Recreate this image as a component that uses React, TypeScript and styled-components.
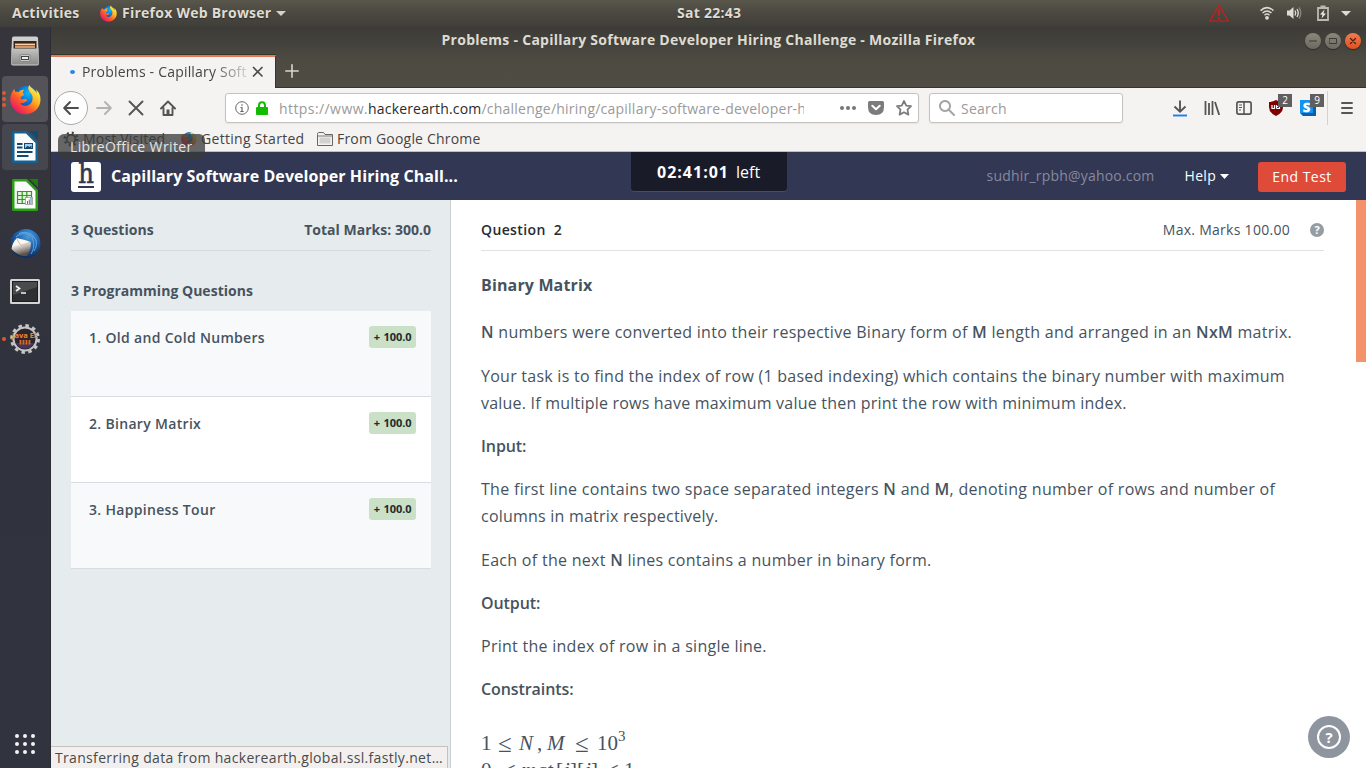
import React from 'react';
import styled, { createGlobalStyle, css } from 'styled-components';

const Global = createGlobalStyle`
  * { box-sizing: border-box; }
  body { margin: 0; background: #fff; overflow: hidden; font-family: "Open Sans", "Noto Sans", sans-serif; }
  svg { display: block; flex: none; }
  p { margin: 0; }
`;

/* ---------- Desktop ---------- */

const Desktop = styled.div`
  position: relative;
  display: flex;
  flex-direction: column;
  width: 1366px;
  height: 768px;
  overflow: hidden;
`;

const TopBar = styled.header`
  display: flex;
  align-items: center;
  height: 27px;
  padding: 0 15px 1px 12px;
  background: linear-gradient(#59564b, #4b4941 45%, #3f3e39);
  color: #dfdbd2;
  font-size: 14px;
  font-weight: 700;
  letter-spacing: 0.25px;
  line-height: 18px;
  white-space: nowrap;
  text-shadow: 0 1px 1px rgba(0, 0, 0, 0.35);
`;

const ActivitiesLabel = styled.span`
  width: 88px;
`;

const AppMenu = styled.div`
  display: flex;
  align-items: center;
  width: 577px;
  gap: 5px;
`;

const Clock = styled.span`
  flex: 1;
`;

const Tray = styled.div`
  display: flex;
  align-items: center;
`;

const Gap = styled.span<{ $w: number }>`
  width: ${(p) => p.$w}px;
`;

const Workspace = styled.div`
  display: flex;
  flex: 1;
  min-height: 0;
`;

const Dock = styled.nav`
  display: flex;
  flex-direction: column;
  width: 51px;
  background: linear-gradient(#37353c, #30333d 45%, #31343f);
  border-right: 1px solid #2c2d34;
`;

const DockTile = styled.div<{ $shade?: string }>`
  position: relative;
  display: flex;
  align-items: center;
  justify-content: center;
  width: 46px;
  height: 46px;
  margin: 1px 2px;
  border-radius: 4px;
  background: ${(p) => p.$shade || 'transparent'};
`;

const RunningDots = styled.div`
  position: absolute;
  left: 0;
  top: 0;
  height: 46px;
  display: flex;
  flex-direction: column;
  justify-content: center;
  gap: 2px;
`;

const Dot = styled.i`
  width: 4px;
  height: 4px;
  border-radius: 50%;
  background: #dd5a2c;
`;

const AppsGrid = styled.div`
  display: grid;
  grid-template-columns: repeat(3, 4px);
  gap: 4px;
  justify-content: center;
  margin-top: auto;
  padding-bottom: 14px;
`;

const AppsDot = styled.i`
  width: 4px;
  height: 4px;
  border-radius: 50%;
  background: #f3f3f3;
`;

const DockTooltip = styled.div`
  position: absolute;
  left: 58px;
  top: 134px;
  width: 147px;
  height: 25px;
  padding-left: 12px;
  border-radius: 6px;
  background: rgba(56, 58, 58, 0.76);
  color: #e4e4e4;
  font-size: 14px;
  line-height: 25px;
  letter-spacing: 0.38px;
  white-space: nowrap;
`;

/* ---------- Browser chrome ---------- */

const Window = styled.main`
  display: flex;
  flex-direction: column;
  flex: 1;
  min-width: 0;
`;

const Frame = styled.div`
  height: 61px;
  background: linear-gradient(#3c3b37, #45433d 30%, #4d4a42 52%, #504c43);
  display: flex;
  flex-direction: column;
`;

const TitleBar = styled.div`
  display: grid;
  grid-template-columns: 1fr auto 1fr;
  align-items: center;
  height: 28px;
  color: #dfdbd2;
  font-size: 14px;
  font-weight: 700;
  letter-spacing: 0.27px;
  white-space: nowrap;
`;

const WindowTitle = styled.span`
  height: 20px;
  line-height: 18px;
`;

const WindowButtons = styled.div`
  display: flex;
  justify-content: flex-end;
  gap: 4px;
  padding-right: 5px;
`;

const RoundButton = styled.span<{ $close?: boolean }>`
  display: flex;
  align-items: center;
  justify-content: center;
  width: 16px;
  height: 16px;
  border-radius: 50%;
  box-shadow: 0 1px 1px rgba(0, 0, 0, 0.4);
  background: ${(p) => (p.$close ? 'linear-gradient(#f27b4f, #e0501f)' : 'linear-gradient(#8a877c, #6b6961)')};
`;

const TabStrip = styled.div`
  display: flex;
  flex: 1;
  border-bottom: 1px solid #35342f;
`;

const Tab = styled.div`
  display: flex;
  align-items: center;
  width: 225px;
  height: 33px;
  margin-bottom: -1px;
  padding: 0 0 1px 19px;
  background: #f4f3f2;
  border-top: 2px solid #e17b55;
  border-right: 1px solid #35342f;
  box-shadow: 0 -1px 0 #35342f;
  color: #444;
  font-size: 14px;
  letter-spacing: 0.2px;
`;

const LoadingDot = styled.i`
  width: 5px;
  height: 4px;
  margin-right: 7px;
  border-radius: 50%;
  background: #2a87e8;
`;

const TabTitle = styled.span`
  width: 166px;
  height: 20px;
  line-height: 19px;
  overflow: hidden;
  white-space: nowrap;
  mask-image: linear-gradient(90deg, #000 78%, rgba(0, 0, 0, 0.15));
`;

const TabClose = styled.div`
  margin-left: 4px;
`;

const NewTab = styled.div`
  padding: 9px 0 0 9px;
`;

const NavBar = styled.div`
  display: flex;
  align-items: center;
  height: 40px;
  padding: 0 0 0 4px;
  background: #f4f3f2;
`;

const ToolCell = styled.div<{ $round?: boolean }>`
  position: relative;
  display: flex;
  align-items: center;
  justify-content: center;
  width: 32px;
  height: 32px;
  ${(p) =>
    p.$round &&
    css`
      width: 34px;
      height: 34px;
      margin: 0 0 0 -1px;
      border: 1px solid #aaa;
      border-radius: 50%;
      background: #fdfdfd;
    `}
`;

const Field = styled.div<{ $w: number; $ml: number }>`
  display: flex;
  align-items: center;
  width: ${(p) => p.$w}px;
  height: 30px;
  margin-left: ${(p) => p.$ml}px;
  padding: 0 6px 0 9px;
  border: 1px solid #c4c3c2;
  border-radius: 3px;
  background: #fff;
  box-shadow: 0 1px 2px rgba(0, 0, 0, 0.06);
  color: #9a9a9a;
  font-size: 14px;
  letter-spacing: 0.23px;
  white-space: nowrap;
`;

const Address = styled.span`
  width: 525px;
  margin-left: 11px;
  overflow: hidden;
`;

const AddressScheme = styled.span`
  letter-spacing: 0.42px;
`;

const AddressHost = styled.span`
  color: #2b2b2b;
  letter-spacing: 0.18px;
`;

const FieldActions = styled.div`
  display: flex;
  align-items: center;
  gap: 12px;
  margin-left: auto;
`;

const SearchHint = styled.span`
  margin-left: 6px;
`;

const ExtensionCells = styled.div`
  display: flex;
  margin-left: 41px;
`;

const Badge = styled.span`
  position: absolute;
  left: 18px;
  top: 2px;
  width: 14px;
  height: 13px;
  background: #5f5f5f;
  color: #fff;
  font-size: 10px;
  line-height: 13px;
  text-align: center;
`;

const Separator = styled.i`
  width: 1px;
  height: 34px;
  margin: 0 12px 0 3px;
  background: #d3d2d1;
`;

const BookmarkBar = styled.div`
  display: flex;
  align-items: center;
  height: 24px;
  padding: 0 0 2px 12px;
  background: #f4f3f2;
  border-bottom: 1px solid #c0bfbf;
  color: #444;
  font-size: 14px;
  letter-spacing: 0.2px;
  white-space: nowrap;
`;

const Bookmark = styled.div<{ $w?: number; $ls?: number }>`
  display: flex;
  align-items: center;
  gap: 4px;
  width: ${(p) => (p.$w ? p.$w + 'px' : 'auto')};
  letter-spacing: ${(p) => p.$ls ?? 0.2}px;
`;

const StatusPopup = styled.div`
  position: absolute;
  left: 51px;
  bottom: 0;
  width: 397px;
  height: 22px;
  padding-left: 4px;
  border: 1px solid #c6c1be;
  border-width: 1px 1px 0 0;
  background: #f2f0ef;
  color: #4a4a4a;
  font-size: 14px;
  line-height: 22px;
  letter-spacing: 0.33px;
  white-space: nowrap;
`;

/* ---------- Challenge page ---------- */

const Page = styled.div`
  display: flex;
  flex-direction: column;
  flex: 1;
  min-height: 0;
  letter-spacing: 0.3px;
`;

const PageHeader = styled.div`
  display: flex;
  height: 48px;
  padding: 0 20px;
  background: #323754;
  color: #fff;
  white-space: nowrap;
`;

const Logo = styled.div`
  display: flex;
  flex-direction: column;
  align-items: center;
  width: 30px;
  height: 30px;
  margin: 10px 10px 0 0;
  border-radius: 3px;
  background: #fff;
  color: #323754;
  font-family: "DejaVu Serif Condensed", "DejaVu Serif", serif;
  font-size: 27px;
  letter-spacing: 0;
  -webkit-text-stroke: 0.6px #323754;
`;

const LogoLetter = styled.span`
  height: 24px;
  line-height: 24px;
`;

const LogoRule = styled.i`
  width: 16px;
  height: 2px;
  background: #323754;
`;

const ChallengeName = styled.h1`
  width: 520px;
  margin: 0;
  font-size: 16px;
  font-weight: 700;
  line-height: 48px;
  letter-spacing: 0.08px;
`;

const Timer = styled.div`
  width: 156px;
  height: 39px;
  border-radius: 0 0 3px 3px;
  background: #1a1b29;
  box-shadow: 0 1px 0 #474b66;
  font-size: 16px;
  line-height: 40px;
  padding-left: 26px;
  letter-spacing: 0;
`;

const TimerDigits = styled.b`
  margin-right: 7px;
  letter-spacing: 1px;
`;

const Account = styled.div`
  display: flex;
  margin-left: auto;
  font-size: 14px;
  line-height: 48px;
`;

const Email = styled.span`
  margin-right: 30px;
  color: #868a9c;
  letter-spacing: 0.2px;
`;

const HelpMenu = styled.span`
  display: flex;
  align-items: center;
  gap: 4px;
  margin-right: 29px;
`;

const EndTest = styled.button`
  width: 88px;
  height: 30px;
  margin-top: 10px;
  padding: 0;
  border: 0;
  border-radius: 3px;
  background: #de4b39;
  color: #fff;
  font: 14px/30px "Open Sans", sans-serif;
  letter-spacing: 0.45px;
`;

const Panels = styled.div`
  display: flex;
  flex: 1;
  min-height: 0;
  color: #46535e;
`;

const Sidebar = styled.aside`
  width: 400px;
  padding: 0 19px 0 20px;
  border-right: 1px solid #cdd0d2;
  background: #e6ebee;
  font-size: 14px;
  font-weight: 600;
`;

const PanelHeading = styled.div<{ $line: string; $bold?: boolean }>`
  display: flex;
  justify-content: space-between;
  height: 51px;
  border-bottom: 1px solid ${(p) => p.$line};
  font-size: 14px;
  font-weight: ${(p) => (p.$bold ? 700 : 400)};
  letter-spacing: ${(p) => (p.$bold ? 0.02 : 0.28)}px;
  line-height: 60px;
`;

const SectionTitle = styled.h2`
  margin: 0;
  padding-top: 30px;
  height: 60px;
  font-size: 14px;
  font-weight: 700;
  line-height: 20px;
  letter-spacing: 0.02px;
`;

const QuestionRow = styled.div<{ $active?: boolean }>`
  display: flex;
  justify-content: space-between;
  height: 86px;
  padding: 15px 15px 0 18px;
  border-bottom: 1px solid #d7dce0;
  background: ${(p) => (p.$active ? '#fff' : '#f8f9fb')};
  line-height: 24px;
  letter-spacing: 0.32px;
`;

const MarksTag = styled.span`
  width: 47px;
  height: 22px;
  border-radius: 3px;
  background: #cae0c7;
  color: #232b2b;
  font-size: 11px;
  font-weight: 700;
  line-height: 22px;
  letter-spacing: -0.1px;
  word-spacing: 1px;
  text-align: center;
`;

const Statement = styled.section`
  flex: 1;
  padding: 0 32px 0 30px;
  background: #fff;
`;

const QuestionNumber = styled.span`
  color: #252c33;
  font-weight: 600;
  letter-spacing: 0.38px;
  white-space: pre;
`;

const MaxMarks = styled.span`
  display: flex;
  align-items: flex-start;
  gap: 20px;
`;

const HelpMark = styled.i`
  width: 14px;
  height: 14px;
  margin: 23px 0 0;
  border-radius: 50%;
  background: #959ca2;
  color: #fff;
  font: 700 11px/14px "Open Sans", sans-serif;
  letter-spacing: 0;
  text-align: center;
`;

const Prose = styled.div`
  padding-top: 21.200px;
  font-size: 16px;
  line-height: 27.200px;
  white-space: nowrap;

  b { font-weight: 600; }
`;

const Paragraph = styled.p`
  margin-bottom: 16px;
`;

const Line = styled.span<{ $ls?: number }>`
  display: block;
  letter-spacing: ${(p) => p.$ls ?? 0.27}px;
`;

const Label = styled.h4`
  margin: 0 0 16px;
  font-size: 16px;
  font-weight: 600;
  letter-spacing: -0.08px;
`;

const ProblemTitle = styled.h3`
  margin: 0 0 20px;
  font-size: 16px;
  font-weight: 700;
  letter-spacing: 0.15px;
`;

const Formulas = styled.div`
  padding-top: 11px;
`;

const Formula = styled.div`
  display: flex;
  height: 27px;
  font: 21px/27px "Liberation Serif", serif;
  letter-spacing: 0;
`;

const Term = styled.span<{ $w: number; $italic?: boolean }>`
  width: ${(p) => p.$w}px;
  font-style: ${(p) => (p.$italic ? 'italic' : 'normal')};
`;

const Relation = styled(Term)`
  font-size: 25px;
`;

const Power = styled.span`
  margin-top: -7px;
  font-size: 15px;
`;

const ScrollThumb = styled.div`
  width: 10px;
  height: 162px;
  background: #f4926c;
`;

const ChatButton = styled.div`
  position: absolute;
  left: 1308px;
  top: 716px;
  display: flex;
  align-items: center;
  justify-content: center;
  width: 42px;
  height: 42px;
  border-radius: 50%;
  background: #8f959e;
`;

const ChatRing = styled.span`
  width: 24px;
  height: 24px;
  border: 2px solid #fff;
  border-radius: 50%;
  color: #fff;
  font-size: 15px;
  font-weight: 700;
  line-height: 21px;
  text-align: center;
`;

/* ---------- Drawings ---------- */

const FirefoxLogo = ({ size, id }: { size: number; id: string }) => (
  <svg width={size} height={size} viewBox="0 0 32 32">
    <defs>
      <linearGradient id={id + 'a'} x1="0.85" y1="0.1" x2="0.15" y2="0.9">
        <stop offset="0" stopColor="#fff34a" />
        <stop offset="0.35" stopColor="#ffb01e" />
        <stop offset="0.62" stopColor="#ff5b2a" />
        <stop offset="1" stopColor="#e5156b" />
      </linearGradient>
      <radialGradient id={id + 'b'} cx="0.6" cy="0.3" r="0.75">
        <stop offset="0" stopColor="#12b8f5" />
        <stop offset="0.5" stopColor="#0a72d8" />
        <stop offset="1" stopColor="#1d2f8c" />
      </radialGradient>
    </defs>
    <circle cx="16.5" cy="14.5" r="12.5" fill={`url(#${id}b)`} />
    <path
      d="M20 1c-2 3-1 5 1 8 2 2 3 5 2 8-1 4-5 6-8 5.500-2-.3-3.500-1.400-4.500-3 2 .6 3.600.2 5-1 1-.8 1.800-.6 2-1.400.2-.9-.8-1.800-2.500-1.600-1.800.3-2.700.5-4 -.3 0-1.600 1-2.700 3.200-3.600.3-1.400-.3-2-1.200-2.300.2-1.500 1-2.600 1.900-3.300-3-.2-5 .9-6.100 2.400C7.300 8 6.500 8 5.700 8.200 4.900 7.400 4.500 6.300 4.500 5 1.500 8.500 0 12.500.3 17c.6 8 7.200 14.200 15.500 14.200 8.800 0 15.700-6.800 15.700-15.200 0-4.500-2-8-4.700-10.200.6 1.500.9 2.700.8 4C26 5.500 21.500 4.500 20 1z"
      fill={`url(#${id}a)`}
    />
  </svg>
);

const FilesLogo = () => (
  <svg width="28" height="30" viewBox="0 0 28 30">
    <defs>
      <linearGradient id="cab" x1="0" y1="0" x2="0" y2="1">
        <stop offset="0" stopColor="#c4c4c2" />
        <stop offset="1" stopColor="#8b8b89" />
      </linearGradient>
    </defs>
    <path d="M1 2Q1 .5 3 .5h22q2 0 2 1.500l1 25.500q0 2-2 2H2q-2 0-2-2z" fill="#cfcfcd" />
    <path d="M2.500 5h23v9h-23z" fill="#3c241d" />
    <path d="M4 7h20v5H4z" fill="#c3552f" />
    <path d="M4 8.500h20M4 11h20" stroke="#f4d3a4" strokeWidth="1" />
    <path d="M.5 12.500h27v16H.5z" fill="url(#cab)" />
    <rect x="9" y="18.500" width="10" height="7" rx="1.500" fill="#c9c9c7" stroke="#777" strokeWidth=".7" />
    <rect x="10.500" y="20.500" width="7" height="3" fill="#eee" stroke="#444" />
  </svg>
);

const OfficeLogo = ({ color, fold, sheet }: { color: string; fold: string; sheet?: boolean }) => (
  <svg width="26" height="32" viewBox="0 0 26 32">
    <path d="M0 1.500Q0 0 1.500 0H15l11 11v19.500q0 1.500-1.500 1.500h-23Q0 32 0 30.500z" fill={color} />
    <path d="M17.500 0H26v8.500z" fill={fold} />
    <path d="M2.500 2.500H14l9.500 9.500v17.500h-21z" fill="#fbfbfb" />
    {sheet ? (
      <g>
        <path d="M5.500 12.500h14v12h-14zM5.500 16.500h14M5.500 20.500h14M10.200 12.500v12M14.800 12.500v12" fill="#e4f5df" stroke="#2f9a1c" strokeWidth="1.200" />
        <rect x="13.500" y="18.500" width="7" height="7" fill="#fff" stroke="#999" strokeWidth=".8" />
        <path d="M15.500 25v-3M17.300 25v-4.500" stroke="#c0503a" />
        <path d="M19 25v-6" stroke="#4a7fb5" />
      </g>
    ) : (
      <g>
        <path d="M5 13h5.500M5 16.500h5.500M5 21h15.500M5 25h11.500" stroke="#13486f" strokeWidth="2" />
        <rect x="12.500" y="12.500" width="8" height="5" fill="#9fd0ee" stroke="#13486f" />
        <path d="M13 17.200l2.500-2.500 2 1.200 2-1.500v2.800z" fill="#13486f" />
      </g>
    )}
  </svg>
);

const ThunderbirdLogo = () => (
  <svg width="31" height="31" viewBox="0 0 31 31">
    <defs>
      <radialGradient id="tb" cx="0.6" cy="0.25" r="0.8">
        <stop offset="0" stopColor="#4a9bdb" />
        <stop offset="0.5" stopColor="#1f5ea8" />
        <stop offset="1" stopColor="#0b2554" />
      </radialGradient>
      <linearGradient id="env" x1="0" y1="0" x2="0.3" y2="1">
        <stop offset="0.4" stopColor="#fbf8f2" />
        <stop offset="1" stopColor="#5c5149" />
      </linearGradient>
    </defs>
    <path d="M3 7C5 4 8 4 10 2.500 15-.5 23 1 27 6c5 6 4.500 15-1 20-2.500 2.500-5 4-8.500 4C10 30 4 27 2 21 0 16 1 13 .5 10 2 10 3 9 3 7z" fill="url(#tb)" />
    <path d="M1.500 21C2 17 3.500 13 7 10c5 1.500 9 2 13.500 4 1 4-.5 9-3.500 14-5 .5-10-1-15.500-7z" fill="url(#env)" />
    <path d="M7 10.500c1 3 3 6.500 5 7 3-.5 5-1.500 8-3.500" fill="none" stroke="#c4bdb2" />
    <path d="M6 9c5-5 13-4 17 1M9 5.500c7-3 14 0 17 7M22 10c3 5 2 11-1 16M26 12c1 4 0 8-2 11" fill="none" stroke="#62aee4" strokeWidth=".9" />
  </svg>
);

const TerminalLogo = () => (
  <svg width="30" height="25" viewBox="0 0 30 25">
    <rect width="30" height="25" rx="1.500" fill="#d4d4d2" />
    <rect x="2.500" y="2.500" width="25" height="20" fill="#2c3032" stroke="#1b1d1e" />
    <path d="M3 3h24v5L3 16z" fill="#484c4e" />
    <path d="M6 7l3.500 2.500L6 12M11 14h5" fill="none" stroke="#f2f2f2" strokeWidth="1.700" />
  </svg>
);

const GearLogo = () => (
  <svg width="32" height="30" viewBox="0 0 32 30">
    <circle cx="16" cy="15" r="11.500" fill="#2a2530" stroke="#c6c6c6" strokeWidth="2" />
    <circle cx="16" cy="15" r="13.500" fill="none" stroke="#c6c6c6" strokeWidth="2.800" strokeDasharray="3.500 3.570" />
    <path d="M7 19a10 10 0 0 0 18 0z" fill="#45355c" />
    <text x="16" y="14" textAnchor="middle" fontFamily="Open Sans" fontWeight="700" fontSize="6.500" fill="#f0862a" textLength="26" lengthAdjust="spacingAndGlyphs">Java EE</text>
    <path d="M11.500 16v4.500M14.500 16v4.500M17.500 16v4.500M20.500 16v4.500" stroke="#dc6a24" strokeWidth="1.800" />
  </svg>
);

const Stroke = ({ d, w = 16, h = 16, color = '#4c4c4c', sw = 2, fill = 'none' }: { d: string; w?: number; h?: number; color?: string; sw?: number; fill?: string }) => (
  <svg width={w} height={h} viewBox={`0 0 ${w} ${h}`} fill={fill} stroke={color} strokeWidth={sw} strokeLinecap="round" strokeLinejoin="round">
    <path d={d} />
  </svg>
);

const Caret = ({ w, h, color }: { w: number; h: number; color: string }) => (
  <svg width={w} height={h} viewBox={`0 0 ${w} ${h}`}>
    <path d={`M0 0H${w}L${w / 2} ${h}z`} fill={color} />
  </svg>
);

const WarningIcon = () => (
  <svg width="20" height="18" viewBox="0 0 20 18" fill="none" stroke="#cf1d1d" strokeWidth="1.200">
    <path d="M10 1.200L19.200 17H.8z" />
    <path d="M10 6v6M10 13.500v2" strokeWidth="1.800" />
  </svg>
);

const WifiIcon = () => (
  <svg width="14" height="14" viewBox="0 0 14 14" fill="none" stroke="#dfdbd2">
    <path d="M.6 4.600Q7-1.400 13.400 4.600" strokeWidth="1.500" />
    <path d="M2.600 7Q7 3 11.400 7" strokeWidth="1.500" />
    <path d="M4.500 9.200Q7 7 9.500 9.200" strokeWidth="1.400" />
    <circle cx="7" cy="11.800" r="1.900" fill="#dfdbd2" stroke="none" />
  </svg>
);

const VolumeIcon = () => (
  <svg width="15" height="14" viewBox="0 0 15 14" fill="none" stroke="#dfdbd2" strokeWidth="1.400">
    <path d="M0 4.500h2.500L6.500 1v12L2.500 9.500H0z" fill="#dfdbd2" stroke="none" />
    <path d="M8 4.500q1.500 2.500 0 5M10 3q2.500 4 0 8" />
    <path d="M12 1.500q3.500 5.500 0 11" stroke="#88857c" />
  </svg>
);

const BatteryIcon = () => (
  <svg width="12" height="16" viewBox="0 0 12 16">
    <path d="M3.500 1.500h5M1 3h10v12H1z" fill="none" stroke="#bdb9b0" strokeWidth="1.800" />
    <path d="M7.500 4.500L3 9.500h2.500L4.500 13.500 9 8.500H6.500z" fill="#efece5" />
  </svg>
);

const InfoIcon = () => (
  <svg width="14" height="14" viewBox="0 0 14 14" fill="none" stroke="#666">
    <circle cx="7" cy="7" r="6.300" />
    <path d="M7 3.200v1.600M5.500 6.500H7v4M5.300 10.500h3.400" strokeWidth="1.200" />
  </svg>
);

const LockIcon = () => (
  <svg width="12" height="14" viewBox="0 0 12 14">
    <path d="M3 7V4.500Q3 1.200 6 1.200T9 4.500V7" fill="none" stroke="#12bc00" strokeWidth="2" />
    <rect y="6" width="12" height="8" rx="1" fill="#12bc00" />
  </svg>
);

const DotsIcon = () => (
  <svg width="16" height="4" viewBox="0 0 16 4" fill="#777">
    <circle cx="2" cy="2" r="2" />
    <circle cx="8" cy="2" r="2" />
    <circle cx="14" cy="2" r="2" />
  </svg>
);

const PocketIcon = () => (
  <svg width="16" height="14" viewBox="0 0 16 14">
    <path d="M1.500 0h13Q16 0 16 1.500V6q0 8-8 8T0 6V1.500Q0 0 1.500 0z" fill="#7c7c7c" />
    <path d="M4.300 4.700L8 8.200l3.700-3.500" fill="none" stroke="#fff" strokeWidth="2" strokeLinecap="round" strokeLinejoin="round" />
  </svg>
);

const HomeIcon = () => (
  <svg width="16" height="16" viewBox="0 0 16 16" fill="none" stroke="#555" strokeWidth="1.900" strokeLinejoin="round" strokeLinecap="round">
    <path d="M1 8.500L8 1.500l7 7M3.500 8v7h9V8" />
    <path d="M8 9.500V15" strokeWidth="3" strokeLinecap="butt" />
  </svg>
);

const DownloadIcon = () => (
  <svg width="16" height="18" viewBox="0 0 16 18" fill="none" strokeWidth="1.900">
    <path d="M8 1.500v11M2.500 7.500L8 12.700l5.500-5.200" stroke="#555" />
    <path d="M1 16.500h14" stroke="#1a80ea" />
  </svg>
);

const MostVisitedIcon = () => (
  <svg width="16" height="16" viewBox="0 0 16 16" fill="none" stroke="#444">
    <circle cx="8" cy="8" r="4.300" strokeWidth="1.600" />
    <circle cx="8" cy="8" r="6.300" strokeWidth="2.400" strokeDasharray="2 2.950" />
  </svg>
);

const FolderIcon = () => (
  <svg width="16" height="14" viewBox="0 0 16 14">
    <path d="M.5 2.500V13.500h15V2.500H8L6.500.5h-5Q.5.500.5 2.500z" fill="#f4f3f2" stroke="#666" />
    <path d="M2.500 5.500h11v6h-11z" fill="#d2d1d0" stroke="none" />
    <path d="M.5 4h15" stroke="#777" />
  </svg>
);

const LibraryIcon = () => (
  <svg width="16" height="14" viewBox="0 0 16 14" fill="none" stroke="#555" strokeWidth="1.800">
    <path d="M1.500 0v14M5 2v12M8.500 0v14M11 1l4.200 13" />
  </svg>
);

const SidebarIcon = () => (
  <svg width="16" height="14" viewBox="0 0 16 14" fill="none" stroke="#555">
    <rect x=".9" y=".9" width="14.200" height="12.200" rx="1.800" strokeWidth="1.700" />
    <path d="M8 1v12" strokeWidth="1.500" />
    <path d="M3 4h3M3 6.500h3M3 9h2" />
  </svg>
);

const ShieldIcon = () => (
  <svg width="14" height="16" viewBox="0 0 14 16">
    <path d="M7 0q3 2 7 2v5q0 6-7 9-7-3-7-9V2q4 0 7-2z" fill="#800000" />
    <path d="M3 5v3.500h2.500V5M7.500 8.500V5M7.500 8.500h3v-2h-3" fill="none" stroke="#fff" strokeWidth="1.200" />
  </svg>
);

const CubeIcon = () => (
  <svg width="16" height="16" viewBox="0 0 16 16">
    <path d="M0 0h13v13H0z" fill="#1293f0" />
    <path d="M0 13h13V0l3 3v13H3z" fill="#0a5fa8" />
    <text x="6.500" y="11.500" textAnchor="middle" fontFamily="Open Sans" fontWeight="700" fontSize="13" fill="#fff" stroke="#fff" strokeWidth=".6">S</text>
  </svg>
);

/* ---------- Content ---------- */

const questions = ['1. Old and Cold Numbers', '2. Binary Matrix', '3. Happiness Tour'];

export default function App() {
  return (
    <Desktop>
      <Global />
      <TopBar>
        <ActivitiesLabel>Activities</ActivitiesLabel>
        <AppMenu>
          <FirefoxLogo size={17} id="menu" />
          <span>Firefox Web Browser</span>
          <Caret w={10} h={5} color="#d5d1c8" />
        </AppMenu>
        <Clock>Sat 22:43</Clock>
        <Tray>
          <WarningIcon />
          <Gap $w={31} />
          <WifiIcon />
          <Gap $w={13} />
          <VolumeIcon />
          <Gap $w={15} />
          <BatteryIcon />
          <Gap $w={12} />
          <Caret w={10} h={5} color="#dfdbd2" />
        </Tray>
      </TopBar>

      <Workspace>
        <Dock>
          <DockTile><FilesLogo /></DockTile>
          <DockTile $shade="#54535a">
            <RunningDots><Dot /><Dot /><Dot /></RunningDots>
            <FirefoxLogo size={31} id="dock" />
          </DockTile>
          <DockTile $shade="#45464e"><OfficeLogo color="#136294" fold="#0d4d77" /></DockTile>
          <DockTile><OfficeLogo color="#2aa015" fold="#1f7d10" sheet /></DockTile>
          <DockTile><ThunderbirdLogo /></DockTile>
          <DockTile><TerminalLogo /></DockTile>
          <DockTile>
            <RunningDots><Dot /></RunningDots>
            <GearLogo />
          </DockTile>
          <AppsGrid>
            {Array.from({ length: 9 }, (_, i) => <AppsDot key={i} />)}
          </AppsGrid>
        </Dock>

        <Window>
          <Frame>
            <TitleBar>
              <span />
              <WindowTitle>Problems - Capillary Software Developer Hiring Challenge - Mozilla Firefox</WindowTitle>
              <WindowButtons>
                <RoundButton><Stroke w={8} h={8} d="M0.5 4h7" color="#3c3b37" sw={1} /></RoundButton>
                <RoundButton><Stroke w={8} h={8} d="M.5 1.500h7v5h-7z" color="#3c3b37" sw={1} /></RoundButton>
                <RoundButton $close><Stroke w={8} h={8} d="M1.500 1.500l5 5M6.500 1.500l-5 5" color="#4a2212" sw={1.3} /></RoundButton>
              </WindowButtons>
            </TitleBar>
            <TabStrip>
              <Tab>
                <LoadingDot />
                <TabTitle>Problems - Capillary Soft</TabTitle>
                <TabClose><Stroke w={12} h={12} d="M1.500 1.500l8.500 8.500M10 1.500l-8.500 8.500" sw={1.7} /></TabClose>
              </Tab>
              <NewTab><Stroke w={14} h={14} d="M7 .8v12.400M.8 7h12.400" color="#d8d5cd" sw={1.6} /></NewTab>
            </TabStrip>
          </Frame>

          <NavBar>
            <ToolCell $round><Stroke d="M15 8H1.500M7 2L1.200 8 7 14" sw={1.9} /></ToolCell>
            <ToolCell><Stroke d="M1 8h13.500M9 2l5.800 6L9 14" color="#b4b3b2" sw={1.9} /></ToolCell>
            <ToolCell><Stroke d="M1.500 1.500l13 13M14.500 1.500l-13 13" sw={1.9} color="#555" /></ToolCell>
            <ToolCell><HomeIcon /></ToolCell>
            <Field $w={694} $ml={41}>
              <InfoIcon />
              <Gap $w={7} />
              <LockIcon />
              <Address>
                <AddressScheme>https://www.</AddressScheme>
                <AddressHost>hackerearth.com</AddressHost>
                /challenge/hiring/capillary-software-developer-h
              </Address>
              <FieldActions>
                <DotsIcon />
                <PocketIcon />
                <Stroke d="M8 1l2.200 4.600 4.800.6-3.500 3.400.9 5L8 12.200l-4.400 2.400.9-5L1 6.200l4.800-.6z" color="#7c7c7c" sw={1.8} />
              </FieldActions>
            </Field>
            <Field $w={194} $ml={10}>
              <Stroke d="M6 1a5 5 0 1 0 .01 0M9.800 9.800L15 15" color="#a5a5a5" />
              <SearchHint>Search</SearchHint>
            </Field>
            <ExtensionCells>
              <ToolCell><DownloadIcon /></ToolCell>
              <ToolCell><LibraryIcon /></ToolCell>
              <ToolCell><SidebarIcon /></ToolCell>
              <ToolCell><ShieldIcon /><Badge>2</Badge></ToolCell>
              <ToolCell><CubeIcon /><Badge>9</Badge></ToolCell>
            </ExtensionCells>
            <Separator />
            <Stroke w={14} h={14} d="M2 2h10M2 7h10M2 12h10" color="#555" sw={1.9} />
          </NavBar>

          <BookmarkBar>
            <Bookmark $w={118}><MostVisitedIcon />Most Visited</Bookmark>
            <Bookmark $w={136} $ls={0.3}><FirefoxLogo size={16} id="mark" />Getting Started</Bookmark>
            <Bookmark><FolderIcon />From Google Chrome</Bookmark>
          </BookmarkBar>

          <Page>
            <PageHeader>
              <Logo><LogoLetter>h</LogoLetter><LogoRule /></Logo>
              <ChallengeName>Capillary Software Developer Hiring Chall...</ChallengeName>
              <Timer><TimerDigits>02:41:01</TimerDigits>left</Timer>
              <Account>
                <Email>sudhir_rpbh@yahoo.com</Email>
                <HelpMenu>Help <Caret w={9} h={5} color="#fff" /></HelpMenu>
                <EndTest>End Test</EndTest>
              </Account>
            </PageHeader>
            <Panels>
              <Sidebar>
                <PanelHeading $line="#d5dadd" $bold>
                  <span>3 Questions</span>
                  <span>Total Marks: 300.0</span>
                </PanelHeading>
                <SectionTitle>3 Programming Questions</SectionTitle>
                {questions.map((q, i) => (
                  <QuestionRow key={q} $active={i === 1}>
                    <span>{q}</span>
                    <MarksTag>+ 100.0</MarksTag>
                  </QuestionRow>
                ))}
              </Sidebar>
              <Statement>
                <PanelHeading $line="#dfe2e5">
                  <QuestionNumber>{'Question  2'}</QuestionNumber>
                  <MaxMarks>Max. Marks 100.00<HelpMark>?</HelpMark></MaxMarks>
                </PanelHeading>
                <Prose>
                  <ProblemTitle>Binary Matrix</ProblemTitle>
                  <Paragraph>
                    <Line $ls={0.29}><b>N</b> numbers were converted into their respective Binary form of <b>M</b> length and arranged in an <b>NxM</b> matrix.</Line>
                  </Paragraph>
                  <Paragraph>
                    <Line $ls={0.25}>Your task is to find the index of row (1 based indexing) which contains the binary number with maximum</Line>
                    <Line $ls={0.21}>value. If multiple rows have maximum value then print the row with minimum index.</Line>
                  </Paragraph>
                  <Label>Input:</Label>
                  <Paragraph>
                    <Line $ls={0.3}>The first line contains two space separated integers <b>N</b> and <b>M</b>, denoting number of rows and number of</Line>
                    <Line $ls={0.22}>columns in matrix respectively.</Line>
                  </Paragraph>
                  <Paragraph>
                    <Line $ls={0.29}>Each of the next <b>N</b> lines contains a number in binary form.</Line>
                  </Paragraph>
                  <Label>Output:</Label>
                  <Paragraph>
                    <Line>Print the index of row in a single line.</Line>
                  </Paragraph>
                  <Label>Constraints:</Label>
                  <Formulas>
                    <Formula>
                      <Term $w={17}>1</Term>
                      <Relation $w={21}>≤</Relation>
                      <Term $w={18} $italic>N</Term>
                      <Term $w={10}>,</Term>
                      <Term $w={28} $italic>M</Term>
                      <Relation $w={22}>≤</Relation>
                      <Term $w={21}>10</Term>
                      <Power>3</Power>
                    </Formula>
                    <Formula>
                      <Term $w={21}>0</Term>
                      <Relation $w={14}>≤</Relation>
                      <Term $w={40} $italic>&nbsp;mat</Term>
                      <Term $w={8}>[</Term>
                      <Term $w={6} $italic>i</Term>
                      <Term $w={7}>]</Term>
                      <Term $w={8}>[</Term>
                      <Term $w={6} $italic>j</Term>
                      <Term $w={14}>]</Term>
                      <Relation $w={19}>≤</Relation>
                      <Term $w={12}>1</Term>
                    </Formula>
                  </Formulas>
                </Prose>
              </Statement>
              <ScrollThumb />
            </Panels>
          </Page>
        </Window>
      </Workspace>

      <DockTooltip>LibreOffice Writer</DockTooltip>
      <StatusPopup>Transferring data from hackerearth.global.ssl.fastly.net…</StatusPopup>
      <ChatButton><ChatRing>?</ChatRing></ChatButton>
    </Desktop>
  );
}
